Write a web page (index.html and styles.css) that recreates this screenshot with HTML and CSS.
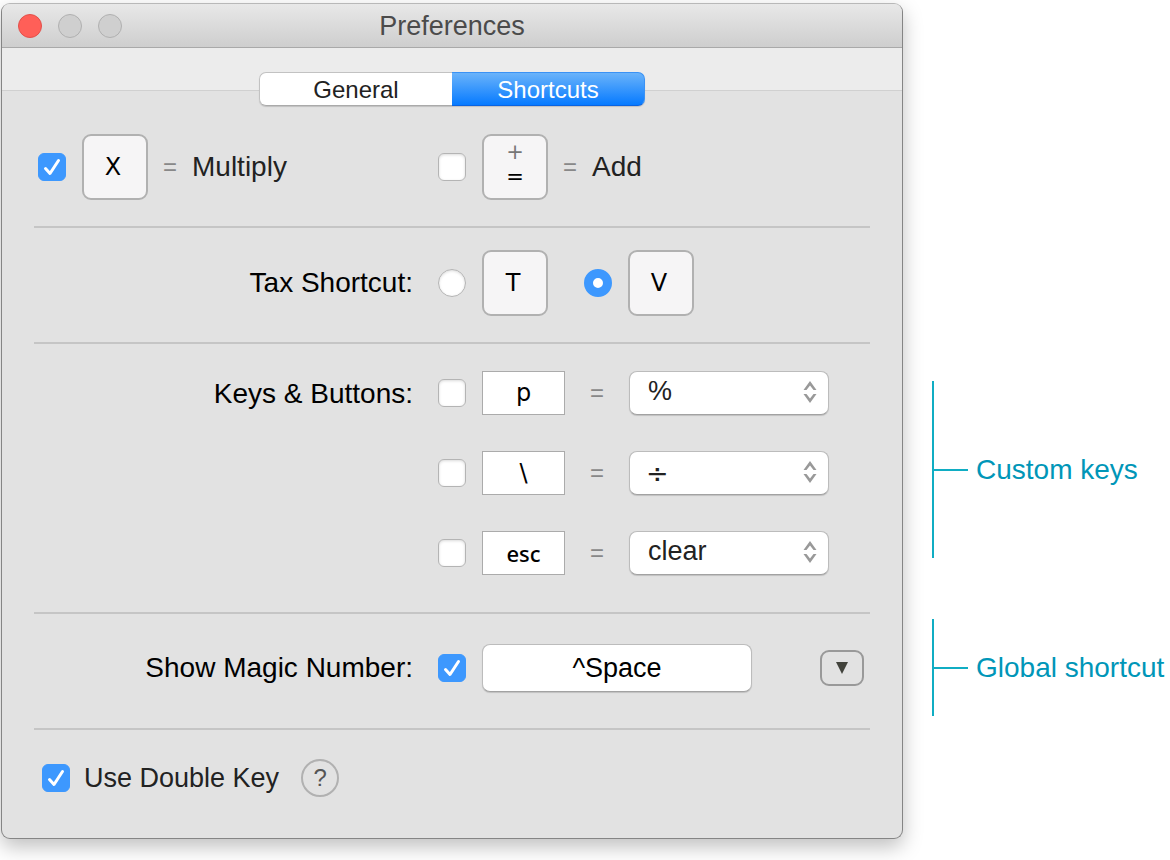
FILE: index.html
```html
<!DOCTYPE html>
<html lang="en">
<head>
    <meta charset="UTF-8">
    <meta name="viewport" content="width=device-width, initial-scale=1.0">
    <title>Preferences</title>
    <link rel="stylesheet" href="styles.css">
</head>
<body>
    <div class="page">
        <main class="window">
            <header class="titlebar">
                <div class="window-buttons">
                    <button type="button" class="dot dot-close" aria-label="Close"></button>
                    <button type="button" class="dot" aria-label="Minimize" disabled></button>
                    <button type="button" class="dot" aria-label="Zoom" disabled></button>
                </div>
                <h1 class="title">Preferences</h1>
            </header>

            <nav class="toolbar">
                <div class="tabs">
                    <button type="button" class="tab">General</button>
                    <button type="button" class="tab tab-active">Shortcuts</button>
                </div>
            </nav>

            <form class="settings">
                <!-- Operator keys -->
                <section class="section section-operators">
                    <label class="option">
                        <span class="tick">
                            <input type="checkbox" class="checkbox" checked>
                            <svg class="tick-mark" viewBox="0 0 28 28"><path d="M7.5 15.5 L12 20.5 L20.5 7.5"/></svg>
                        </span>
                        <kbd class="key">X</kbd>
                        <span class="equals">=</span>
                        <span>Multiply</span>
                    </label>
                    <label class="option">
                        <span class="tick"><input type="checkbox" class="checkbox"></span>
                        <kbd class="key key-double"><span class="key-upper">+</span><span>=</span></kbd>
                        <span class="equals">=</span>
                        <span>Add</span>
                    </label>
                </section>

                <!-- Tax key -->
                <section class="section section-tax" role="radiogroup" aria-labelledby="taxLabel">
                    <span class="section-label" id="taxLabel">Tax Shortcut:</span>
                    <div class="radios">
                        <label class="option">
                            <input type="radio" class="radio" name="tax" value="T">
                            <kbd class="key">T</kbd>
                        </label>
                        <label class="option">
                            <input type="radio" class="radio" name="tax" value="V" checked>
                            <kbd class="key">V</kbd>
                        </label>
                    </div>
                </section>

                <!-- Custom keys -->
                <section class="section section-keys" role="group" aria-labelledby="keysLabel">
                    <span class="section-label" id="keysLabel">Keys &amp; Buttons:</span>
                    <div class="mappings">
                        <div class="mapping">
                            <input type="checkbox" class="checkbox" aria-label="Enable first key">
                            <input type="text" class="key-input" value="p" aria-label="First key">
                            <span class="equals equals-wide">=</span>
                            <div class="dropdown">
                                <select class="select" aria-label="First button">
                                    <option>%</option>
                                </select>
                                <svg class="arrows" viewBox="0 0 14 22"><path d="M7 0 L13.5 9 H10.5 L7 4.5 L3.5 9 H.5 Z M7 22 L13.5 13 H10.5 L7 17.5 L3.5 13 H.5 Z"/></svg>
                            </div>
                        </div>
                        <div class="mapping">
                            <input type="checkbox" class="checkbox" aria-label="Enable second key">
                            <input type="text" class="key-input" value="\" aria-label="Second key">
                            <span class="equals equals-wide">=</span>
                            <div class="dropdown">
                                <select class="select select-symbol" aria-label="Second button">
                                    <option>÷</option>
                                </select>
                                <svg class="arrows" viewBox="0 0 14 22"><path d="M7 0 L13.5 9 H10.5 L7 4.5 L3.5 9 H.5 Z M7 22 L13.5 13 H10.5 L7 17.5 L3.5 13 H.5 Z"/></svg>
                            </div>
                        </div>
                        <div class="mapping">
                            <input type="checkbox" class="checkbox" aria-label="Enable third key">
                            <input type="text" class="key-input key-input-word" value="esc" aria-label="Third key">
                            <span class="equals equals-wide">=</span>
                            <div class="dropdown">
                                <select class="select" aria-label="Third button">
                                    <option>clear</option>
                                </select>
                                <svg class="arrows" viewBox="0 0 14 22"><path d="M7 0 L13.5 9 H10.5 L7 4.5 L3.5 9 H.5 Z M7 22 L13.5 13 H10.5 L7 17.5 L3.5 13 H.5 Z"/></svg>
                            </div>
                        </div>
                    </div>
                </section>

                <!-- Global shortcut -->
                <section class="section section-magic">
                    <label class="section-label" for="magic">Show Magic Number:</label>
                    <div class="mapping">
                        <span class="tick">
                            <input type="checkbox" class="checkbox" id="magic" checked>
                            <svg class="tick-mark" viewBox="0 0 28 28"><path d="M7.5 15.5 L12 20.5 L20.5 7.5"/></svg>
                        </span>
                        <input type="text" class="shortcut-input" value="^Space" aria-label="Global shortcut">
                        <button type="button" class="more" aria-label="More shortcuts">
                            <svg class="more-icon" viewBox="0 0 12 12"><path d="M0 0 H12 L6 12 Z"/></svg>
                        </button>
                    </div>
                </section>

                <section class="section section-double">
                    <label class="option option-double">
                        <span class="tick">
                            <input type="checkbox" class="checkbox" checked>
                            <svg class="tick-mark" viewBox="0 0 28 28"><path d="M7.5 15.5 L12 20.5 L20.5 7.5"/></svg>
                        </span>
                        <span>Use Double Key</span>
                    </label>
                    <button type="button" class="help" aria-label="Help">?</button>
                </section>
            </form>
        </main>

        <aside class="notes">
            <p class="note note-keys">Custom keys</p>
            <p class="note note-global">Global shortcut</p>
        </aside>
    </div>
</body>
</html>
```

FILE: styles.css
```css
* {
    box-sizing: border-box;
}

body {
    margin: 0;
    background-color: white;
    color: #222;
    font-family: "Liberation Sans", Arial, sans-serif;
    font-size: 28px;
    line-height: 32px;
}

button,
input,
select {
    margin: 0;
    padding: 0;
    font-family: inherit;
    color: inherit;
}

.page {
    display: flex;
    align-items: flex-start;
    padding: 3px 0 21px 1px;
}

/* Window */
.window {
    flex: 1;
    min-width: 0;
    border: 1px solid #858585;
    border-top-color: #b8b8b8;
    border-radius: 9px;
    background-color: #e2e2e2;
    box-shadow: 0 8px 20px rgba(0, 0, 0, 0.25);
}

.titlebar {
    display: grid;
    grid-template-columns: 1fr auto 1fr;
    align-items: center;
    height: 44px;
    padding: 0 16px;
    border-bottom: 1px solid #a9a9a9;
    border-radius: 8px 8px 0 0;
    background: linear-gradient(#e8e8e8, #cecece);
}

.window-buttons {
    display: flex;
    gap: 16px;
}

.dot {
    width: 24px;
    height: 24px;
    border: 1px solid #b0b0b0;
    border-radius: 50%;
    background-color: #cfcfcf;
}

.dot-close {
    border-color: #e2504a;
    background-color: #ff5f58;
}

.title {
    margin: 0;
    color: #4b4b4b;
    font-size: 27px;
    font-weight: normal;
}

.toolbar {
    display: flex;
    justify-content: center;
    height: 43px;
    padding-top: 24px;
    border-bottom: 1px solid #d0d0d0;
    background-color: #ececec;
}

/* Tabs hang over the lower edge of the toolbar */
.tabs {
    display: flex;
    height: 34px;
    border-radius: 7px;
    box-shadow: 0 1px 1px rgba(0, 0, 0, 0.15);
}

.tab {
    width: 193px;
    padding-top: 2px;
    border: 1px solid #c2c2c2;
    border-right: none;
    border-bottom-color: #aaa;
    border-radius: 7px 0 0 7px;
    background-color: white;
    font-size: 24px;
}

.tab-active {
    border: 1px solid #3a92f5;
    border-left: none;
    border-bottom-color: #0a63e0;
    border-radius: 0 7px 7px 0;
    background: linear-gradient(#6ab3fa, #067aff);
    color: white;
}

/* Sections */
.section {
    display: grid;
    grid-template-columns: 1fr 432px;
    column-gap: 25px;
    margin: 0 32px;
    border-bottom: 2px solid #c5c5c5;
}

.section-operators {
    padding: 43px 0 26px;
}

.section-operators .option:first-child {
    padding-left: 4px;
}

.section-tax {
    align-items: center;
    padding: 22px 0 26px;
}

.section-keys {
    padding: 27px 0 37px;
}

.section-magic {
    align-items: center;
    padding: 30px 0 36px;
}

.section-double {
    display: flex;
    align-items: center;
    gap: 22px;
    padding: 29px 8px 41px;
    border-bottom: none;
}

.section-label {
    color: black;
    text-align: right;
}

.section-keys .section-label {
    line-height: 46px;
}

.option,
.mapping {
    display: flex;
    align-items: center;
}

.option-double {
    font-size: 27px;
}

.radios {
    display: flex;
    gap: 36px;
}

.mappings {
    display: grid;
    gap: 36px;
}

/* Check boxes and radio buttons */
.checkbox,
.radio {
    flex: none;
    appearance: none;
    width: 28px;
    height: 28px;
    margin-right: 16px;
    border: 1px solid #b4b4b4;
    border-radius: 6px;
    background-color: white;
    box-shadow: inset 0 1px 3px rgba(0, 0, 0, 0.15);
}

.checkbox:checked {
    border-color: #3d98fe;
    background-color: #3d98fe;
    box-shadow: none;
}

.radio {
    border-radius: 50%;
}

.radio:checked {
    border: 9px solid #3d98fe;
    box-shadow: none;
}

.option-double .checkbox {
    margin-right: 14px;
}

.tick {
    display: grid;
}

.tick .checkbox,
.tick-mark {
    grid-area: 1 / 1;
}

.tick-mark {
    z-index: 1;
    width: 28px;
    height: 28px;
    fill: none;
    stroke: white;
    stroke-width: 3;
    stroke-linecap: round;
    stroke-linejoin: round;
    pointer-events: none;
}

/* Keys */
.key {
    display: flex;
    flex-direction: column;
    align-items: center;
    justify-content: center;
    width: 66px;
    height: 66px;
    padding-right: 4px;
    border: 2px solid #b1b1b1;
    border-radius: 9px;
    background-color: #f6f5f6;
    color: black;
    font-family: "DejaVu Sans", sans-serif;
    font-size: 24px;
}

.key-double {
    padding: 0 0 4px;
    font-size: 21px;
    line-height: 25px;
}

.key-upper {
    color: #777;
}

.equals {
    width: 44px;
    color: #888;
    font-size: 24px;
    text-align: center;
}

.equals-wide {
    width: 64px;
}

.key-input {
    width: 83px;
    height: 44px;
    border: 1px solid #ababab;
    background-color: white;
    color: black;
    font-family: "DejaVu Sans", sans-serif;
    font-size: 24px;
    text-align: center;
}

.key-input-word {
    font-family: "Noto Sans", sans-serif;
    font-size: 22px;
    font-weight: 500;
}

.dropdown {
    position: relative;
    width: 200px;
}

.select {
    appearance: none;
    display: block;
    width: 100%;
    height: 44px;
    padding: 0 36px 4px 18px;
    border: 1px solid #bcbcbc;
    border-bottom-color: #a2a2a2;
    border-radius: 8px;
    background-color: white;
    box-shadow: 0 1px 1px rgba(0, 0, 0, 0.15);
    font-size: 27px;
}

.select-symbol {
    padding: 0 36px 0 16px;
    font-family: "DejaVu Sans", sans-serif;
}

.arrows {
    position: absolute;
    top: 10px;
    right: 12px;
    width: 14px;
    height: 22px;
    fill: #999;
    pointer-events: none;
}

.shortcut-input {
    width: 270px;
    height: 48px;
    border: 1px solid #bcbcbc;
    border-bottom-color: #a2a2a2;
    border-radius: 8px;
    background-color: white;
    box-shadow: 0 1px 1px rgba(0, 0, 0, 0.15);
    color: black;
    font-size: 27px;
    text-align: center;
}

.more {
    display: grid;
    place-items: center;
    width: 44px;
    height: 36px;
    margin: 0 6px 0 auto;
    border: 2px solid #999;
    border-radius: 9px;
    background: none;
}

.more-icon {
    width: 12px;
    height: 12px;
    fill: #42433c;
}

.help {
    width: 38px;
    height: 38px;
    border: 2px solid #b1b1b1;
    border-radius: 50%;
    background: none;
    color: #555;
    font-size: 24px;
}

/* Notes beside the window */
.notes {
    flex: none;
    width: 267px;
    padding: 378px 0 0 29px;
    color: #0096b8;
}

.note {
    display: flex;
    align-items: center;
    gap: 8px;
    margin: 0;
    border-left: 2px solid #10adc3;
    white-space: nowrap;
}

.note::before {
    content: "";
    width: 34px;
    height: 2px;
    background-color: #10adc3;
}

.note-keys {
    height: 177px;
    margin-bottom: 61px;
}

.note-global {
    height: 97px;
}
```
